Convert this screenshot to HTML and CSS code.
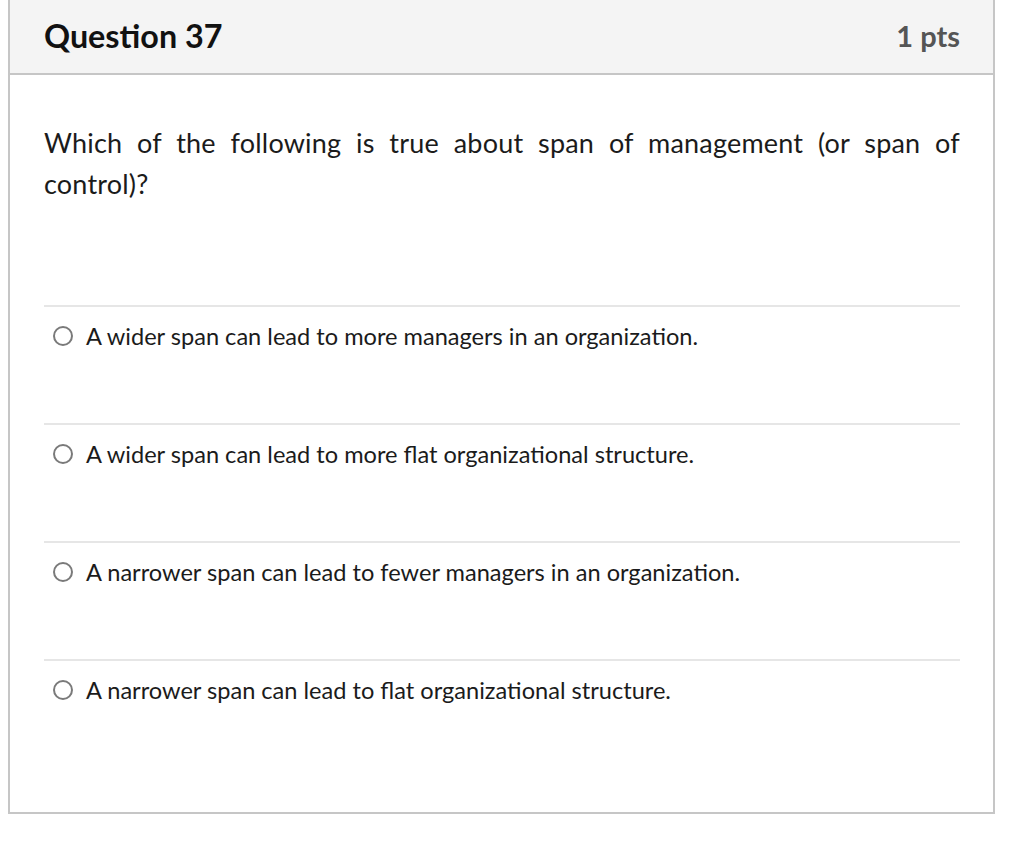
FILE: index.html
```html
<!DOCTYPE html>
<html lang="en">
<head>
<meta charset="utf-8">
<title>Question 37</title>
<link rel="stylesheet" href="styles.css">
</head>
<body>
<div class="question">
  <div class="header">
    <h2 class="title">Question 37</h2>
    <span class="points">1 pts</span>
  </div>
  <div class="content">
    <p class="text">Which of the following is true about span of management (or span of control)?</p>
    <div class="answers">
      <label class="answer"><span class="radio"></span><span class="answer-text">A wider span can lead to more managers in an organization.</span></label>
      <label class="answer"><span class="radio"></span><span class="answer-text">A wider span can lead to more flat organizational structure.</span></label>
      <label class="answer"><span class="radio"></span><span class="answer-text">A narrower span can lead to fewer managers in an organization.</span></label>
      <label class="answer last"><span class="radio"></span><span class="answer-text">A narrower span can lead to flat organizational structure.</span></label>
    </div>
  </div>
</div>
</body>
</html>
```
FILE: styles.css
```css
* { box-sizing: border-box; }
body {
  margin: 0;
  background: #fff;
  font-family: Lato, "Open Sans", "Liberation Sans", sans-serif;
  color: #1b1b1b;
}
.question {
  margin-left: 8px;
  width: 987px;
  border: 2px solid #c6c6c6;
  border-top: 0;
}
.header {
  height: 75px;
  background: #f4f4f4;
  border-bottom: 2px solid #c6c6c6;
  display: flex;
  align-items: center;
  justify-content: space-between;
  padding: 0 33px 3px 34px;
}
.title {
  margin: 0;
  font-size: 32.3px;
  font-weight: 700;
  color: #111;
}
.points {
  font-size: 29px;
  font-weight: 700;
  color: #555;
}
.content {
  padding: 47px 33px 0 34px;
}
.text {
  margin: 0;
  font-size: 27px;
  line-height: 41px;
  text-align: justify;
  letter-spacing: 0.2px;
}
.answers {
  margin-top: 101px;
}
.answer {
  display: flex;
  align-items: center;
  gap: 13px;
  height: 118px;
  padding: 0 0 58px 9px;
  border-top: 2px solid #e6e6e6;
  font-size: 23.6px;
}
.answer.last {
  height: 153px;
  padding-bottom: 93px;
}
.radio {
  width: 20px;
  height: 20px;
  border: 2px solid #7a7a7a;
  border-radius: 50%;
  flex: none;
}
```
